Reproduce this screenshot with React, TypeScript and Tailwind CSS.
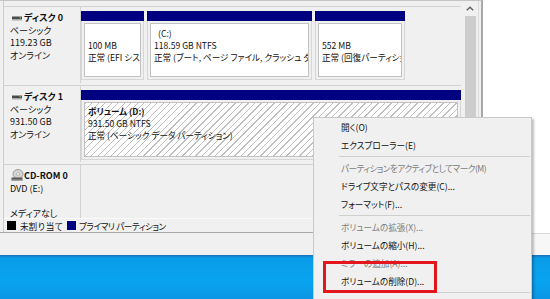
import React from "react";

function DiskIcon() {
  return (
    <svg width="10" height="5" viewBox="0 0 10 5" className="shrink-0">
      <rect x="0" y="0.5" width="10" height="2.5" fill="#4a4a4a" />
      <rect x="0" y="3" width="10" height="1.5" fill="#a8a8a8" />
      <rect x="7.5" y="1.2" width="1.5" height="1" fill="#7fd36a" />
    </svg>
  );
}

function CdIcon() {
  return (
    <svg width="13" height="12" viewBox="0 0 13 12" className="shrink-0">
      <ellipse cx="7" cy="5" rx="5" ry="4.5" fill="#d4d4d4" stroke="#8c8c8c" strokeWidth="0.8" />
      <ellipse cx="7" cy="5" rx="1.6" ry="1.4" fill="#f4f4f4" stroke="#9a9a9a" strokeWidth="0.6" />
      <rect x="0.5" y="8.5" width="11" height="3" fill="#5a5a5a" />
      <rect x="0.5" y="10.5" width="11" height="1" fill="#a0a0a0" />
    </svg>
  );
}

function Block({
  w,
  lines,
}: {
  w: string;
  lines: { t: string; cls?: string }[];
}) {
  return (
    <div className={`${w} h-full flex flex-col`}>
      <div className="h-[10px] bg-[#000080] shrink-0" />
      <div className="flex-1 min-h-0 border border-t-0 border-[#d6d6d6] p-[2px] flex">
        <div className="flex-1 min-w-0 bg-white border border-[#c2c2c2] pl-[3px] pt-[3px] overflow-hidden">
          {lines.map((l, i) => (
            <div key={i} className={`h-[12px] whitespace-nowrap overflow-hidden ${l.cls ?? ""}`}>
              {l.t}
            </div>
          ))}
        </div>
      </div>
    </div>
  );
}

function MenuItem({ t, gray, cls }: { t: string; gray?: boolean; cls?: string }) {
  return (
    <div
      className={`h-[18px] flex items-center pl-[27px] whitespace-nowrap ${
        gray ? "text-[#7c7c7c]" : "text-[#111]"
      } ${cls ?? ""}`}
    >
      {t}
    </div>
  );
}

function Sep() {
  return (
    <div className="h-[5px] flex items-center">
      <div className="ml-[25px] mr-[1px] h-px flex-1 bg-[#cfcfcf]" />
    </div>
  );
}

export default function App() {
  return (
    <div className="w-[550px] h-[299px] overflow-hidden relative bg-white text-[8.6px] leading-[12px] text-[#111] font-['Noto_Sans_CJK_JP','Noto_Sans',sans-serif] [font-feature-settings:'palt']">
      <div className="flex h-[255px]">
        {/* window */}
        <div className="w-[483px] h-full flex flex-col bg-[#f0f0f0] border-t border-[#c4c4c4] border-r-2 border-r-[#a9a9a9]">
          <div className="flex-1 min-h-0 ml-[3px] mr-[2px] flex flex-col border-l border-[#cdcdcd] border-r border-r-[#dcdcdc]">
            <div className="flex-1 min-h-0 flex overflow-hidden">
              <div className="flex-1 min-w-0 flex flex-col gap-[2px] pt-[5px]">
                {/* Disk 0 */}
                <div className="h-[77px] shrink-0 flex border-t border-[#d2d2d2]">
                  <div className="w-[77px] shrink-0 border-r border-[#d2d2d2] pl-[6px] pt-[5px] leading-[12.5px] text-[9px]">
                    <div className="flex items-center h-[12.5px] font-bold">
                      <span className="ml-[2px] mr-[2px] flex">
                        <DiskIcon />
                      </span>
                      ディスク 0
                    </div>
                    <div>ベーシック</div>
                    <div>119.23 GB</div>
                    <div>オンライン</div>
                  </div>
                  <div className="flex-1 min-w-0 pt-[4px] h-[73px] flex gap-[3px]">
                    <Block
                      w="w-[63px]"
                      lines={[{ t: "" }, { t: "100 MB" }, { t: "正常 (EFI システム パーティション)" }]}
                    />
                    <Block
                      w="w-[165px]"
                      lines={[
                        { t: "(C:)", cls: "pl-[4px]" },
                        { t: "118.59 GB NTFS" },
                        { t: "正常 (ブート, ページ ファイル, クラッシュ ダンプ, プライマリ パーティション)" },
                      ]}
                    />
                    <Block
                      w="w-[90px]"
                      lines={[{ t: "" }, { t: "552 MB" }, { t: "正常 (回復パーティション)" }]}
                    />
                  </div>
                </div>

                {/* Disk 1 */}
                <div className="h-[77px] shrink-0 flex border-t border-[#d2d2d2]">
                  <div className="w-[77px] shrink-0 border-r border-[#d2d2d2] pl-[6px] pt-[5px] leading-[12.5px] text-[9px]">
                    <div className="flex items-center h-[12.5px] font-bold">
                      <span className="ml-[2px] mr-[2px] flex">
                        <DiskIcon />
                      </span>
                      ディスク 1
                    </div>
                    <div>ベーシック</div>
                    <div>931.50 GB</div>
                    <div>オンライン</div>
                  </div>
                  <div className="flex-1 min-w-0 pt-[4px] h-[74px] flex">
                    <div className="flex-1 h-full flex flex-col">
                      <div className="h-[10px] bg-[#000080] shrink-0" />
                      <div className="flex-1 min-h-0 border border-t-0 border-[#d6d6d6] p-[2px] flex">
                        <div className="flex-1 min-w-0 border border-[#c2c2c2] pl-[3px] pt-[2px] overflow-hidden bg-[repeating-linear-gradient(135deg,#bfbfbf_0px,#bfbfbf_1px,#ffffff_1px,#ffffff_4.6px)]">
                          <div className="h-[12px] whitespace-nowrap font-bold">ボリューム (D:)</div>
                          <div className="h-[12px] whitespace-nowrap">931.50 GB NTFS</div>
                          <div className="h-[12px] whitespace-nowrap">正常 (ベーシック データ パーティション)</div>
                        </div>
                      </div>
                    </div>
                  </div>
                </div>

                {/* CD-ROM 0 */}
                <div className="h-[80px] shrink-0 flex border-t border-[#d2d2d2]">
                  <div className="w-[77px] shrink-0 border-r border-[#d2d2d2] pl-[6px] pt-[5px] leading-[12.5px] text-[9px]">
                    <div className="flex items-center h-[12.5px] font-bold">
                      <span className="ml-[1px] mr-[0px] flex -mt-[3px]">
                        <CdIcon />
                      </span>
                      CD-ROM 0
                    </div>
                    <div>DVD (E:)</div>
                    <div className="h-[12.5px]" />
                    <div>メディアなし</div>
                  </div>
                  <div className="flex-1" />
                </div>
              </div>

              {/* scrollbar */}
              <div className="w-[17px] shrink-0 flex flex-col bg-[#f0f0f0]">
                <div className="h-[15px] flex items-center justify-center pl-[1px]">
                  <svg width="8" height="5" viewBox="0 0 8 5">
                    <polyline points="0.8,4.3 4,1.2 7.2,4.3" fill="none" stroke="#606060" strokeWidth="1.4" />
                  </svg>
                </div>
                <div className="ml-[4px] w-[11px] h-[190px] bg-[#cdcdcd]" />
              </div>
            </div>

            {/* legend */}
            <div className="h-[14px] shrink-0 border-t border-[#fafafa] flex items-center pl-[3px] whitespace-nowrap text-[8.6px]">
              <div className="w-[9px] h-[9px] bg-black" />
              <span className="ml-[4px] [font-feature-settings:normal]">未割り当て</span>
              <div className="ml-[4px] w-[9px] h-[9px] bg-[#000080]" />
              <span className="ml-[3px] tracking-[-0.4px]">プライマリ パーティション</span>
            </div>
          </div>
          <div className="h-px bg-[#a8a8a8] shrink-0" />
          <div className="h-[22px] shrink-0" />
        </div>

        {/* right white area */}
        <div className="flex-1 flex flex-col">
          <div className="flex-1 bg-white" />
          <div className="h-px bg-[#dadada]" />
          <div className="h-[21px] bg-[#f7f7f7]" />
        </div>
      </div>

      {/* desktop */}
      <div className="h-[44px] bg-[linear-gradient(180deg,#1a6fb8_0px,#0a9de9_3px,#08a3ef_60%,#0b96e4_100%)]" />

      {/* context menu */}
      <div className="absolute left-[313px] top-[117px] w-[219px] h-[200px] bg-[#f0f0f0] border border-[#c9c9c9] shadow-[2px_2px_2px_rgba(0,0,0,0.25)]">
        <MenuItem t="開く(O)" />
        <MenuItem t="エクスプローラー(E)" />
        <Sep />
        <MenuItem t="パーティションをアクティブとしてマーク(M)" gray cls="tracking-[-0.5px]" />
        <MenuItem t="ドライブ文字とパスの変更(C)..." />
        <MenuItem t="フォーマット(F)..." />
        <Sep />
        <MenuItem t="ボリュームの拡張(X)..." gray />
        <MenuItem t="ボリュームの縮小(H)..." />
        <MenuItem t="ミラーの追加(A)..." gray />
        <MenuItem t="ボリュームの削除(D)..." />
        <Sep />
        <MenuItem t="プロパティ(P)" />
      </div>

      {/* red highlight */}
      <div className="absolute left-[323px] top-[261px] w-[114px] h-[32px] border-[3px] border-[#e3151d]" />
    </div>
  );
}
